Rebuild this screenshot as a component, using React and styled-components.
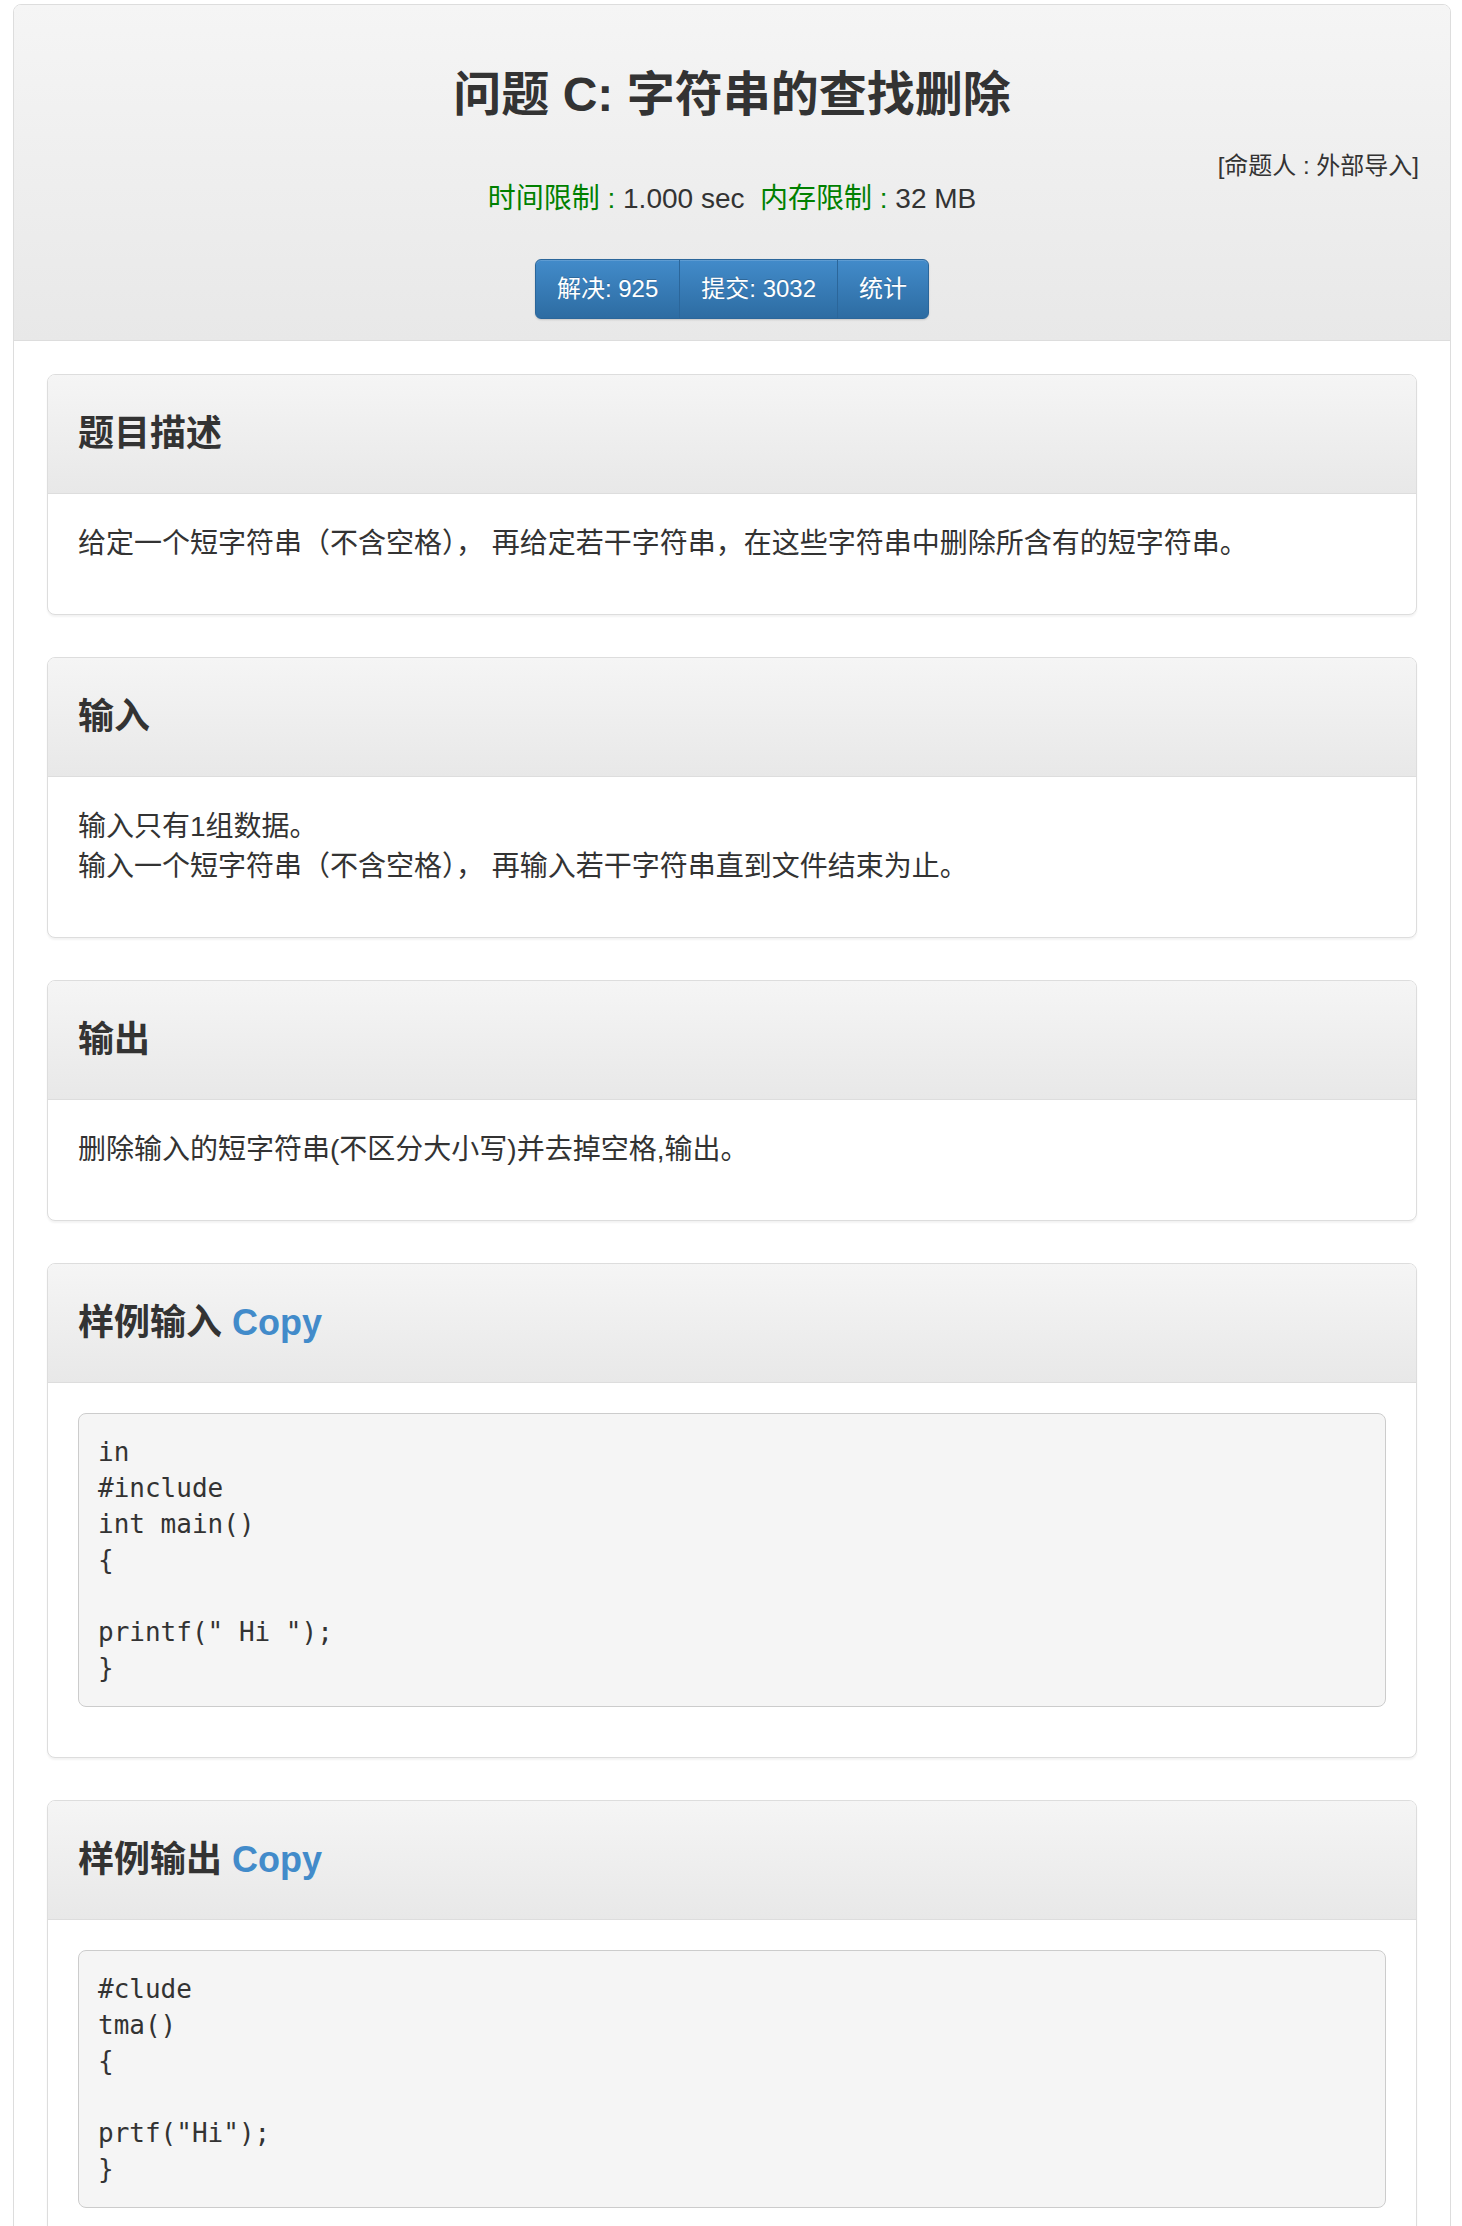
import React from "react";
import styled, { createGlobalStyle } from "styled-components";

const Global = createGlobalStyle`
  html, body { margin: 0; padding: 0; background: #fff; }
  body {
    font-family: "Liberation Sans", "Noto Sans CJK SC", sans-serif;
    color: #333;
  }
  * { box-sizing: border-box; }
`;

const Page = styled.div`
  margin: 4px 11px 24px 13px;
  border: 1px solid #ddd;
  border-radius: 8px;
  background: #fff;
  overflow: hidden;
`;

const Header = styled.div`
  background: linear-gradient(to bottom, #f5f5f5 0%, #e8e8e8 100%);
  border-bottom: 1px solid #ddd;
  padding: 0 31px 21px;
  display: flex;
  flex-direction: column;
  align-items: center;
`;

const Title = styled.h1`
  margin: 63px 0 0;
  font-size: 48px;
  line-height: 53px;
  font-weight: 700;
  color: #333;
`;

const Author = styled.div`
  align-self: stretch;
  text-align: right;
  margin-top: 29px;
  font-size: 24px;
  line-height: 32px;
  color: #333;
`;

const Limits = styled.div`
  font-size: 28px;
  line-height: 34px;
  color: #333;
`;

const Green = styled.span`
  color: #008000;
`;

const BtnGroup = styled.div`
  display: flex;
  margin-top: 43px;
  border-radius: 6px;
  box-shadow: 0 1px 2px rgba(0, 0, 0, 0.15);
`;

const Btn = styled.a`
  display: block;
  font-size: 24px;
  line-height: 32px;
  padding: 13px 21px;
  color: #fff;
  text-decoration: none;
  text-shadow: 0 -1px 0 rgba(0, 0, 0, 0.2);
  background: linear-gradient(to bottom, #428bca 0%, #2d6ca2 100%);
  border: 1px solid #2b669a;
  box-shadow: inset 0 1px 0 rgba(255, 255, 255, 0.15);
  margin-left: -1px;
  &:first-child {
    margin-left: 0;
    border-radius: 6px 0 0 6px;
  }
  &:last-child {
    border-radius: 0 6px 6px 0;
  }
`;

const Body = styled.div`
  padding: 33px 33px 10px;
`;

const Card = styled.section`
  border: 1px solid #ddd;
  border-radius: 8px;
  background: #fff;
  box-shadow: 0 2px 2px rgba(0, 0, 0, 0.05);
  margin-bottom: 42px;
  overflow: hidden;
`;

const CardHead = styled.div`
  background: linear-gradient(to bottom, #f5f5f5 0%, #e8e8e8 100%);
  border-bottom: 1px solid #ddd;
  padding: 39px 30px;
`;

const CardTitle = styled.h2`
  margin: 0;
  font-size: 36px;
  line-height: 40px;
  font-weight: 700;
  color: #333;
`;

const CopyLink = styled.a`
  color: #428bca;
  text-decoration: none;
  margin-left: 10px;
`;

const CardBody = styled.div`
  padding: 30px;
`;

const Para = styled.div`
  margin: 0 0 20px;
  font-size: 28px;
  line-height: 40px;
  color: #333;
`;

const Pre = styled.pre`
  margin: 0 0 20px;
  padding: 20px 19px;
  background: #f5f5f5;
  border: 1px solid #ccc;
  border-radius: 8px;
  font-family: "DejaVu Sans Mono", "Liberation Mono", monospace;
  font-size: 26px;
  line-height: 36px;
  color: #333;
  white-space: pre-wrap;
`;

const sampleIn = `in
#include
int main()
{

printf(" Hi ");
}`;

const sampleOut = `#clude
tma()
{

prtf("Hi");
}`;

export default function App() {
  return (
    <>
      <Global />
      <Page>
        <Header>
          <Title>问题 C: 字符串的查找删除</Title>
          <Author>[命题人 : 外部导入]</Author>
          <Limits>
            <Green>时间限制 : </Green>1.000 sec&nbsp;&nbsp;<Green>内存限制 : </Green>32 MB
          </Limits>
          <BtnGroup>
            <Btn>解决: 925</Btn>
            <Btn>提交: 3032</Btn>
            <Btn>统计</Btn>
          </BtnGroup>
        </Header>
        <Body>
          <Card>
            <CardHead>
              <CardTitle>题目描述</CardTitle>
            </CardHead>
            <CardBody>
              <Para>给定一个短字符串（不含空格）， 再给定若干字符串，在这些字符串中删除所含有的短字符串。</Para>
            </CardBody>
          </Card>
          <Card>
            <CardHead>
              <CardTitle>输入</CardTitle>
            </CardHead>
            <CardBody>
              <Para>
                输入只有1组数据。
                <br />
                输入一个短字符串（不含空格）， 再输入若干字符串直到文件结束为止。
              </Para>
            </CardBody>
          </Card>
          <Card>
            <CardHead>
              <CardTitle>输出</CardTitle>
            </CardHead>
            <CardBody>
              <Para>删除输入的短字符串(不区分大小写)并去掉空格,输出。</Para>
            </CardBody>
          </Card>
          <Card>
            <CardHead>
              <CardTitle>
                样例输入<CopyLink>Copy</CopyLink>
              </CardTitle>
            </CardHead>
            <CardBody>
              <Pre>{sampleIn}</Pre>
            </CardBody>
          </Card>
          <Card>
            <CardHead>
              <CardTitle>
                样例输出<CopyLink>Copy</CopyLink>
              </CardTitle>
            </CardHead>
            <CardBody>
              <Pre>{sampleOut}</Pre>
            </CardBody>
          </Card>
        </Body>
      </Page>
    </>
  );
}
